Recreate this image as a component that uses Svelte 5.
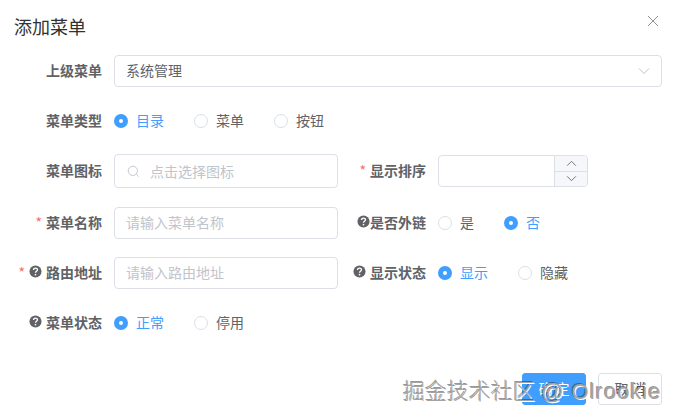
<script>
	let types = ['目录', '菜单', '按钮'];
</script>

<div class="dialog">
	<header>
		<span class="title">添加菜单</span>
		<svg class="close" viewBox="0 0 12 12" width="12" height="12">
			<path d="M1 1 L11 11 M11 1 L1 11" />
		</svg>
	</header>

	<form class="body">
		<div class="item full">
			<label>上级菜单</label>
			<div class="input select">
				<span>系统管理</span>
				<svg class="arrow" viewBox="0 0 12 8" width="12" height="8"><path d="M1 1.5 L6 6.5 L11 1.5" /></svg>
			</div>
		</div>

		<div class="item full">
			<label>菜单类型</label>
			<div class="radios">
				{#each types as t, i}
					<span class="radio" class:on={i === 0}><i></i>{t}</span>
				{/each}
			</div>
		</div>

		<div class="item tall">
			<label>菜单图标</label>
			<div class="input icon-input">
				<svg class="search" viewBox="0 0 14 14" width="13" height="13"><circle cx="6.3" cy="6.3" r="5" /><path d="M10 10 L12.6 12.6" /></svg>
				<span class="ph">点击选择图标</span>
			</div>
		</div>
		<div class="item tall">
			<label><b>*</b>显示排序</label>
			<div class="number">
				<div class="num-field"></div>
				<div class="spin">
					<div><svg viewBox="0 0 12 8" width="11" height="7"><path d="M1 6.5 L6 1.5 L11 6.5" /></svg></div>
					<div><svg viewBox="0 0 12 8" width="11" height="7"><path d="M1 1.5 L6 6.5 L11 1.5" /></svg></div>
				</div>
			</div>
		</div>

		<div class="item">
			<label><b>*</b>菜单名称</label>
			<div class="input"><span class="ph">请输入菜单名称</span></div>
		</div>
		<div class="item">
			<label>
				<svg class="help tight" viewBox="0 0 14 14" width="13" height="13"><circle cx="7" cy="7" r="6.5" /><path d="M4.9 5.3 C4.9 2.7 9.1 2.7 9.1 5.2 C9.1 6.8 7 6.8 7 8.4" /><rect x="6.2" y="9.6" width="1.6" height="1.6" /></svg>是否外链
			</label>
			<div class="radios">
				<span class="radio short"><i></i>是</span>
				<span class="radio on short"><i></i>否</span>
			</div>
		</div>

		<div class="item">
			<label>
				<b>*</b>
				<svg class="help" viewBox="0 0 14 14" width="13" height="13"><circle cx="7" cy="7" r="6.5" /><path d="M4.9 5.3 C4.9 2.7 9.1 2.7 9.1 5.2 C9.1 6.8 7 6.8 7 8.4" /><rect x="6.2" y="9.6" width="1.6" height="1.6" /></svg>路由地址
			</label>
			<div class="input"><span class="ph">请输入路由地址</span></div>
		</div>
		<div class="item">
			<label>
				<svg class="help" viewBox="0 0 14 14" width="13" height="13"><circle cx="7" cy="7" r="6.5" /><path d="M4.9 5.3 C4.9 2.7 9.1 2.7 9.1 5.2 C9.1 6.8 7 6.8 7 8.4" /><rect x="6.2" y="9.6" width="1.6" height="1.6" /></svg>显示状态
			</label>
			<div class="radios">
				<span class="radio on"><i></i>显示</span>
				<span class="radio"><i></i>隐藏</span>
			</div>
		</div>

		<div class="item">
			<label>
				<svg class="help" viewBox="0 0 14 14" width="13" height="13"><circle cx="7" cy="7" r="6.5" /><path d="M4.9 5.3 C4.9 2.7 9.1 2.7 9.1 5.2 C9.1 6.8 7 6.8 7 8.4" /><rect x="6.2" y="9.6" width="1.6" height="1.6" /></svg>菜单状态
			</label>
			<div class="radios">
				<span class="radio on"><i></i>正常</span>
				<span class="radio"><i></i>停用</span>
			</div>
		</div>
	</form>

	<footer>
		<button class="primary" type="button">确 定</button>
		<button type="button">取 消</button>
	</footer>

	<div class="watermark">掘金技术社区 <span>@ Olrookie</span></div>
</div>

<style>
	:global(body) {
		background: #fff;
	}
	.dialog {
		position: relative;
		width: 678px;
		height: 419px;
		background: #fff;
		color: #606266;
		font-family: "Noto Sans CJK SC", "Liberation Sans", sans-serif;
		font-size: 14px;
		overflow: hidden;
	}
	header {
		height: 55px;
		padding: 13px 19px 0 14px;
		box-sizing: border-box;
		display: flex;
		justify-content: space-between;
	}
	.title {
		font-size: 18px;
		line-height: 26px;
		color: #303133;
	}
	.close {
		margin-top: 2px;
	}
	.close path {
		stroke: #909399;
		stroke-width: 1;
		fill: none;
	}
	.body {
		display: grid;
		grid-template-columns: 324px 324px;
		padding-left: 14px;
	}
	.item {
		display: flex;
		height: 32px;
		margin-bottom: 18px;
		align-items: center;
	}
	.full {
		grid-column: 1 / 3;
	}
	.tall {
		margin-bottom: 20px;
	}
	label {
		width: 100px;
		flex: none;
		box-sizing: border-box;
		padding: 0 12px 2px 0;
		text-align: right;
		font-weight: 700;
		line-height: 30px;
		white-space: nowrap;
		display: flex;
		justify-content: flex-end;
		align-items: center;
	}
	label b {
		color: #f56c6c;
		font-weight: 400;
		margin-right: 4px;
	}
	.help {
		margin-right: 4px;
		margin-top: -2px;
	}
	.help.tight {
		margin-right: 0;
	}
	.help circle {
		fill: #606266;
	}
	.help path {
		fill: none;
		stroke: #fff;
		stroke-width: 1.5;
	}
	.help rect {
		fill: #fff;
	}
	.input {
		flex: 1;
		height: 32px;
		box-sizing: border-box;
		border: 1px solid #dcdfe6;
		border-radius: 4px;
		padding: 0 11px;
		display: flex;
		align-items: center;
		justify-content: space-between;
	}
	.input span {
		margin-top: -2px;
	}
	.tall .input {
		height: 34px;
	}
	.tall .input span {
		margin-top: 0;
	}
	.ph {
		color: #c0c4cc;
	}
	.icon-input {
		justify-content: flex-start;
		gap: 10px;
		padding-left: 12px;
	}
	.search circle,
	.search path {
		fill: none;
		stroke: #c0c4cc;
		stroke-width: 1;
	}
	.arrow path {
		fill: none;
		stroke: #c0c4cc;
		stroke-width: 1;
	}
	.number {
		width: 150px;
		height: 32px;
		box-sizing: border-box;
		border: 1px solid #dcdfe6;
		border-radius: 4px;
		display: flex;
		overflow: hidden;
	}
	.num-field {
		flex: 1;
	}
	.spin {
		width: 32px;
		background: #f5f7fa;
		border-left: 1px solid #dcdfe6;
		display: flex;
		flex-direction: column;
	}
	.spin div {
		flex: 1;
		display: flex;
		align-items: center;
		justify-content: center;
	}
	.spin div + div {
		border-top: 1px solid #dcdfe6;
	}
	.spin path {
		fill: none;
		stroke: #606266;
		stroke-width: 1;
	}
	.radios {
		display: flex;
		gap: 30px;
	}
	.radio {
		display: flex;
		align-items: center;
		gap: 8px;
		line-height: 20px;
		padding-bottom: 2px;
	}
	.radio.short {
		min-width: 36px;
	}
	.radio i {
		width: 14px;
		height: 14px;
		margin-top: 2px;
		box-sizing: border-box;
		border: 1px solid #dcdfe6;
		border-radius: 50%;
		background: #fff;
		display: block;
	}
	.radio.on {
		color: #409eff;
	}
	.radio.on i {
		border: 5px solid #409eff;
	}
	footer {
		position: absolute;
		right: 16px;
		top: 373px;
		display: flex;
		gap: 12px;
	}
	button {
		width: 64px;
		height: 32px;
		border: 1px solid #dcdfe6;
		border-radius: 3px;
		background: #fff;
		color: #606266;
		font: inherit;
		font-size: 14px;
		padding: 0 0 2px;
	}
	.primary {
		background: #409eff;
		border-color: #409eff;
		color: #fff;
	}
	.watermark {
		position: absolute;
		left: 403px;
		top: 377px;
		font-size: 22px;
		font-weight: 300;
		line-height: 30px;
		color: #a4a4a4;
		white-space: nowrap;
		font-family: "Liberation Sans", "Noto Sans CJK SC", sans-serif;
		text-shadow: 1px 1px 0 #fff, -1px -1px 0 rgba(50, 50, 50, 0.5);
	}
	.watermark span {
		letter-spacing: 1px;
	}
</style>
